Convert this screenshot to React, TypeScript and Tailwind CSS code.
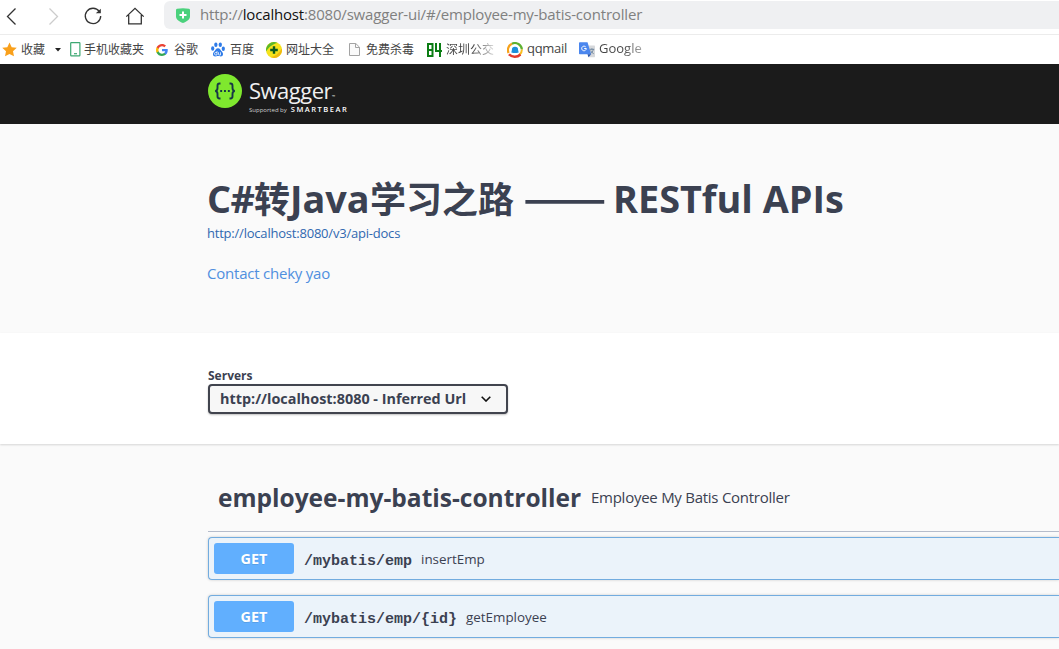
import type { ReactNode } from "react";

function StarIcon() {
  return (
    <svg width="15" height="15" viewBox="0 0 24 24">
      <path fill="#f9a01b" d="M12 0.8l3.5 7.4 8.1 1-6 5.6 1.6 8.1L12 19l-7.2 3.9 1.6-8.1-6-5.6 8.1-1z" />
    </svg>
  );
}
function PhoneIcon() {
  return (
    <svg width="11" height="15" viewBox="0 0 11 15" fill="none" stroke="#3da872">
      <rect x="0.7" y="0.7" width="9.2" height="13.2" rx="0.6" strokeWidth="1.2" />
      <path d="M4 11.7h3" strokeWidth="1.2" />
    </svg>
  );
}
function GoogleIcon() {
  return (
    <svg width="12" height="12" viewBox="0 0 24 24">
      <path fill="#4285f4" d="M23.5 12.3c0-.9-.1-1.6-.2-2.4H12v4.7h6.5c-.3 1.5-1.1 2.800-2.400 3.600v3h3.900c2.200-2.100 3.500-5.100 3.500-8.900z" />
      <path fill="#34a853" d="M12 24c3.200 0 6-1.100 8-2.900l-3.900-3c-1.100.7-2.500 1.200-4.100 1.200-3.100 0-5.800-2.100-6.700-5H1.200v3.100C3.200 21.300 7.300 24 12 24z" />
      <path fill="#fbbc05" d="M5.300 14.300c-.3-.7-.4-1.500-.4-2.300s.1-1.600.4-2.300V6.600H1.200C.4 8.200 0 10.100 0 12s.4 3.800 1.200 5.400z" />
      <path fill="#ea4335" d="M12 4.700c1.800 0 3.300.6 4.600 1.800L20 3.100C17.900 1.200 15.200 0 12 0 7.300 0 3.200 2.700 1.200 6.600l4.100 3.100c.9-2.900 3.600-5 6.700-5z" />
    </svg>
  );
}
function BaiduIcon() {
  return (
    <svg width="14" height="15" viewBox="0 0 28 30" fill="#2f7be8">
      <ellipse cx="9.700" cy="5.500" rx="3.300" ry="4.700" />
      <ellipse cx="18.600" cy="5.500" rx="3.300" ry="4.700" />
      <ellipse cx="3.400" cy="13" rx="3.200" ry="4.500" />
      <ellipse cx="24.600" cy="13.500" rx="3.200" ry="4.500" />
      <path d="M14 12.500c4 0 5.500 4.500 8 7 3.500 3.500 2.500 9.500-2.500 9.500-2.500 0-3-.8-5.500-.8S11 29 8.500 29c-5 0-6-6-2.500-9.500 2.500-2.500 4-7 8-7z" />
      <path d="M12 18v8H9.500a2.400 2.400 0 0 1 0-5H12M15 20.500v4.200c0 1 .5 1.300 1.300 1.300H19v-5.500" fill="none" stroke="#fff" strokeWidth="1.500" />
    </svg>
  );
}
function PlusBallIcon() {
  return (
    <svg width="16" height="16" viewBox="0 0 16 16">
      <circle cx="8" cy="8" r="8" fill="#f5e31c" />
      <path d="M0.100 9.500A8 8 0 0 1 11.500 .9C7.500 1.600 3 4.500 .1 9.500z" fill="#5cb82a" />
      <path d="M15.900 6.500A8 8 0 0 1 4.500 15.100C9 14.400 13 11.500 15.900 6.500z" fill="#f0b90f" />
      <path d="M8 4.200v7.600M4.200 8h7.600" stroke="#0b5a1c" strokeWidth="2.400" />
    </svg>
  );
}
function PageIcon() {
  return (
    <svg width="11" height="13" viewBox="0 0 11 13" fill="#fafafa" stroke="#a3a3a3">
      <path d="M.5.5h6.300l3.700 3.700v8.300H.5z" />
      <path d="M6.500.5v4h4" fill="none" />
    </svg>
  );
}
function DigitsIcon() {
  return (
    <svg className="ml-px" width="15" height="14" viewBox="0 0 15 14" fill="none" stroke="#0b7d14" strokeWidth="2">
      <path d="M1 1h4.500v12H1zM1 7h4.500M9 0v8H15M13 0v14" />
    </svg>
  );
}
function QQMailIcon() {
  return (
    <svg width="16" height="16" viewBox="0 0 16 16" fill="none">
      <path d="M1.600 11A7 7 0 0 1 5 1.700" stroke="#f6a21b" strokeWidth="2.200" />
      <path d="M5 1.700A7 7 0 0 1 14.900 7.500" stroke="#5eb130" strokeWidth="2.200" />
      <path d="M14.900 7.500c0 2.500-1 4-2.400 5.200" stroke="#f8bd20" strokeWidth="2" />
      <path d="M2 12.200c3 3.300 8 3.500 11.500.3" stroke="#e23b2c" strokeWidth="2.400" />
      <path d="M8 4.700a3.100 3.100 0 0 1 3.100 3.200l.6 2.700-2 .5H6.300l-2-.5.6-2.700A3.100 3.100 0 0 1 8 4.700z" fill="#1c8fdb" />
    </svg>
  );
}
function TranslateIcon() {
  return (
    <svg width="16" height="16" viewBox="0 0 16 16">
      <path d="M6 3.500h9.300c.4 0 .7.300.7.700v10.300c0 .4-.3.700-.7.700H9.500z" fill="#d6d8db" />
      <path d="M.8.300h7.700l3.700 12H.8c-.5 0-.8-.3-.8-.8V1.100C0 .6.300.3.800.3z" fill="#4a86ee" />
      <path d="M8.500 12.300h3.700l-2.700 3z" fill="#2b58b0" />
      <path d="M6.700 4.900A2.300 2.300 0 1 0 7.300 6.500H5.200" fill="none" stroke="#fff" strokeWidth="1" />
      <path d="M10.800 7.300h4.400M12.900 6.300v1M14.300 7.300c-.3 2-1.500 3.500-2.800 4.200M11.700 8.500c.7 1.500 2 2.700 3 3.200" fill="none" stroke="#66809a" strokeWidth=".9" />
    </svg>
  );
}

type Bookmark = { label: string; icon: ReactNode; box: string; iconBox: string; text?: string };

const bookmarks: Bookmark[] = [
  { label: "手机收藏夹", icon: <PhoneIcon />, box: "w-[86px]", iconBox: "w-[14px]" },
  { label: "谷歌", icon: <GoogleIcon />, box: "w-[55px]", iconBox: "w-[18px]" },
  { label: "百度", icon: <BaiduIcon />, box: "w-[55px]", iconBox: "w-[19px]" },
  { label: "网址大全", icon: <PlusBallIcon />, box: "w-[83px]", iconBox: "w-[20px]" },
  { label: "免费杀毒", icon: <PageIcon />, box: "w-[77px]", iconBox: "w-[17px]" },
  { label: "深圳公交", icon: <DigitsIcon />, box: "w-[81px]", iconBox: "w-[20px]", text: "bg-linear-to-r from-[#444] from-55% to-[#ddd] bg-clip-text text-transparent" },
  { label: "qqmail", icon: <QQMailIcon />, box: "w-[72px]", iconBox: "w-[20px]", text: "pb-0.5 text-[13px] tracking-[-0.3px]" },
  { label: "Google", icon: <TranslateIcon />, box: "w-[70px]", iconBox: "w-[20px]", text: "pb-0.5 text-[13px] bg-linear-to-r from-[#444] from-55% to-[#aaa] bg-clip-text text-transparent" },
];

function BrowserBar() {
  return (
    <div className="h-16 bg-white">
      <div className="flex h-[35px] items-start border-b border-[#ececec]">
        <svg className="shrink-0" width="164" height="33" viewBox="0 0 164 33" fill="none" stroke="#333" strokeWidth="1.300">
          <path d="M15.500 8.500L7.500 16.500l8 8" />
          <path d="M49.500 8.500l8 8-8 8" stroke="#ccc" />
          <path d="M99.300 11.500A7.700 7.700 0 1 0 100.700 16" />
          <path d="M100.800 8.800v4.500h-5z" fill="#333" stroke="none" />
          <path d="M126.300 16.600L135 8.300l8.700 8.300M128.700 15v8.900h12.600V15" />
        </svg>
        <div className="mt-px flex h-7 flex-1 items-center rounded-l-md bg-[#eff0f2] pl-3">
          <svg width="14" height="15" viewBox="0 0 14 15">
            <path d="M1 .8Q7 -.4 13 .8q1 .2 1 1.200v6.500c0 3-3 5-7 6.500-4-1.500-7-3.500-7-6.500V2Q0 1 1 .8z" fill="#4ad17c" />
            <path d="M7 3.500v7M3.500 7h7" stroke="#fff" strokeWidth="2" />
          </svg>
          <div className="pb-0.5 pl-[10px] text-[15px] leading-5 tracking-[-0.18px] whitespace-nowrap text-[#808080]">
            http://<span className="text-[#111]">localhost</span>:8080/swagger-ui/#/employee-my-batis-controller
          </div>
        </div>
      </div>
      <div className="flex h-[29px] items-center pl-[2px] text-[12px] text-[#444]">
        <div className="flex w-[68px] shrink-0 items-center">
          <StarIcon />
          <span className="ml-1">收藏</span>
          <svg className="ml-[10px]" width="6" height="4" viewBox="0 0 6 4"><path d="M0 0h6L3 3.500z" fill="#222" /></svg>
        </div>
        {bookmarks.map((b) => (
          <div key={b.label} className={`flex shrink-0 items-center ${b.box}`}>
            <span className={`shrink-0 ${b.iconBox}`}>{b.icon}</span>
            <span className={`whitespace-nowrap ${b.text ?? ""}`}>{b.label}</span>
          </div>
        ))}
      </div>
    </div>
  );
}

function SwaggerLogo() {
  return (
    <div className="flex items-start pt-[10px]">
      <svg width="34" height="34" viewBox="0 0 34 34" fill="none" stroke="#173647" strokeWidth="1.900">
        <circle cx="17" cy="17" r="17" fill="#7fe82e" stroke="none" />
        <path d="M12.500 9.500h-1c-1.500 0-2 .8-2 2.200v2.300c0 1.800-.6 2.800-2.300 3 1.700.2 2.300 1.200 2.300 3v2.300c0 1.400.5 2.200 2 2.200h1M21.500 9.500h1c1.500 0 2 .8 2 2.200v2.300c0 1.800.6 2.800 2.300 3-1.700.2-2.300 1.200-2.300 3v2.300c0 1.400-.5 2.200-2 2.200h-1" />
        <path d="M12.200 17h1.900M16 17h1.900M19.900 17h1.900" />
      </svg>
      <div className="ml-[7px] text-white">
        <div className="flex h-[31px] items-start">
          <span className="text-[22px] leading-[33px] tracking-[-0.5px] text-[#f0f0f0]">Swagger</span>
          <span className="mt-[20px] text-[4px] leading-[6px]">™</span>
        </div>
        <div className="flex items-baseline text-[6px] leading-[9px] whitespace-nowrap">
          <span className="text-[#d0d0d0]">Supported by</span>
          <span className="ml-1 text-[7.5px] font-semibold tracking-[1.5px]">SMARTBEAR</span>
        </div>
      </div>
    </div>
  );
}

const operations = [
  { method: "GET", path: "/mybatis/emp", summary: "insertEmp" },
  { method: "GET", path: "/mybatis/emp/{id}", summary: "getEmployee" },
];

export default function App() {
  return (
    <div className="h-[649px] w-[1059px] overflow-hidden bg-[#fafafa] font-['Open_Sans','Noto_Sans_CJK_SC',sans-serif] text-[#3b4151]">
      <BrowserBar />
      <header className="h-[60px] bg-[#1b1b1b] pl-[208px]">
        <SwaggerLogo />
      </header>
      <section className="h-[209px] pt-[46px] pl-[207px]">
        <h2 className="flex h-[52px] items-baseline text-[37.8px] leading-[52px] font-bold whitespace-nowrap">
          <span className="w-[47px] tracking-[-0.5px]">C#</span>
          <span className="text-[36px]">转</span>
          <span className="w-[80px]">Java</span>
          <span className="text-[36px]">学习之路</span>
          <span className="ml-[9px] w-[80px]">
            <span className="inline-block origin-left scale-x-[1.26] font-['Noto_Sans_CJK_SC'] text-[39px] leading-[52px]">——</span>
          </span>
          <span className="ml-[10px]">RESTful APIs</span>
        </h2>
        <a className="mt-px block h-5 text-[13px] leading-5 tracking-[-0.21px] text-[#3068b0]">http://localhost:8080/v3/api-docs</a>
        <a className="mt-5 block h-5 text-[15px] leading-5 tracking-[-0.22px] text-[#4f8fdf]">Contact cheky yao</a>
      </section>
      <section className="h-[111px] bg-white pt-[35px] pl-[208px] shadow-[0_1px_2px_0_rgba(0,0,0,0.15)]">
        <div className="h-4 text-[12px] leading-4 font-bold">Servers</div>
        <div className="flex h-[30px] w-[300px] items-center rounded-[4px] border-2 border-[#41444e] bg-[#f7f7f7] pl-[10px] text-[14.4px] font-bold shadow-[0_1px_2px_0_rgba(0,0,0,0.25)]">
          <span className="w-[261px] leading-[26px] whitespace-nowrap">http://localhost:8080 - Inferred Url</span>
          <svg className="shrink-0" width="10" height="6" viewBox="0 0 10 6" fill="none" stroke="#111" strokeWidth="1.600"><path d="M.7.700L5 5 9.300.700" /></svg>
        </div>
      </section>
      <main className="pt-[30px] pl-[208px]">
        <div className="flex h-[58px] items-center border-b border-[#b5bccb] pb-[10px] pl-[10px] whitespace-nowrap">
          <h3 className="w-[373px] pt-0.5 text-[24.5px] font-bold">employee-my-batis-controller</h3>
          <span className="pb-px text-[15px] tracking-[-0.26px]">Employee My Batis Controller</span>
        </div>
        <div className="mt-[5px] flex flex-col gap-[15px]">
          {operations.map((op) => (
            <div key={op.path} className="flex h-[43px] items-center rounded-l-[4px] border border-r-0 border-[#72acdf] bg-[#ebf3fa] pl-[5px] shadow-[0_0_3px_rgba(0,0,0,0.19)]">
              <span className="flex h-[31px] w-20 items-center justify-center rounded-[3px] bg-[#61affe] text-[14.4px] font-bold text-white [text-shadow:0_1px_0_rgba(0,0,0,0.1)]">{op.method}</span>
              <span className="ml-[10px] pt-[7px] font-['Liberation_Mono',monospace] text-[15px] font-bold">{op.path}</span>
              <span className="ml-[9px] pt-0.5 text-[13.4px]">{op.summary}</span>
            </div>
          ))}
        </div>
      </main>
    </div>
  );
}
